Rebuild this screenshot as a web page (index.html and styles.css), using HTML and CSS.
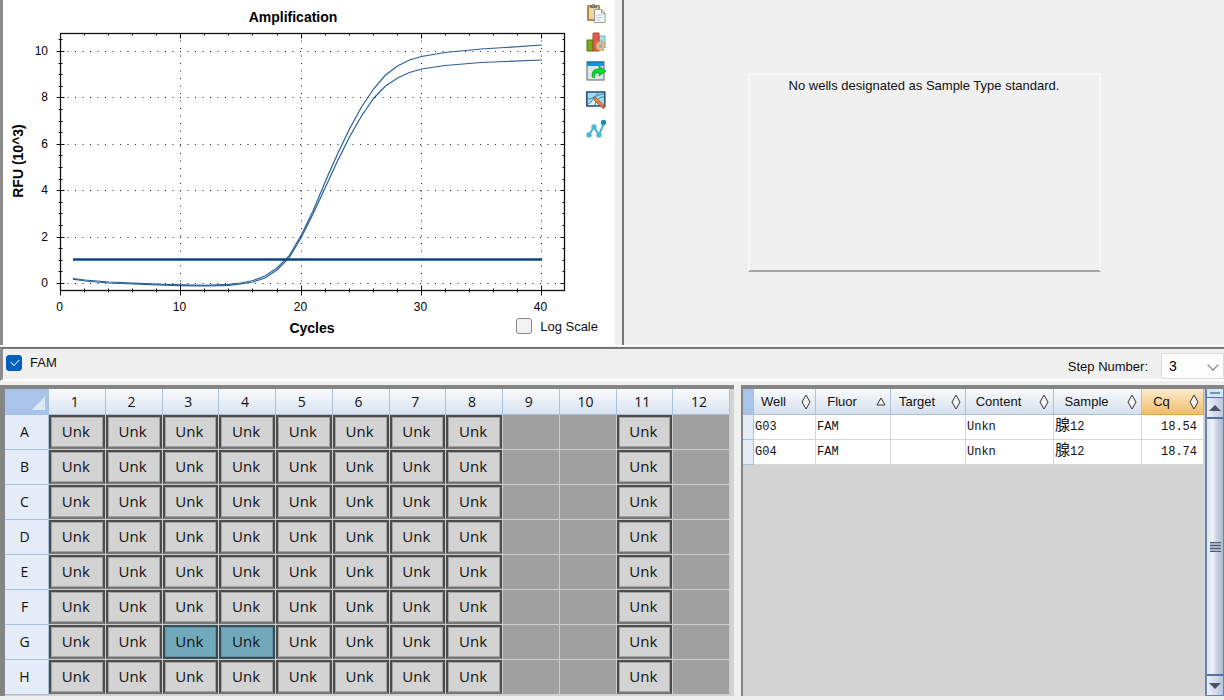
FILE: index.html
```html
<!DOCTYPE html>
<html lang="en">
  <head>
    <meta charset="utf-8">
    <title>Quantification</title>
    <link rel="stylesheet" href="styles.css">
  </head>
  <body>
    <section class="charts">
      <div class="chart-panel">
        <svg class="chart" viewBox="3 0 581 345" role="img" aria-label="Amplification">
          <g id="grid" class="grid"></g>
          <path class="curve" d="M73 278.5L85 280L109 282L133 283.2L157 284L181 284.8L205 285.4L229 284.4L241 283L253 280.5L265 276L277 268L289 256L301 235.5L313 211L325.500 181L337.500 154L349.500 129L361.500 107L373.500 89L385.500 75L397.500 66L409.500 60L421.500 56.500L445 52.500L481 49L505 47.500L542 45"/>
          <path class="curve" d="M73 279.2L85 281L109 283L133 284L157 284.8L181 285.6L205 286L229 285.4L241 284L253 282L265 278L277 270L289 258L301 238L313 214L325.500 187L337.500 161L349.500 137L361.500 116L373.500 98.500L385.500 86L397.500 78L409.500 72.500L421.500 69L445 65.500L481 62.500L505 61.500L542 60"/>
          <path class="threshold" d="M73 259.500H542"/>
          <rect class="frame" x="60.500" y="33.500" width="504" height="257"/>
          <g id="ticks" class="ticks"></g>
          <g id="labels" class="axis-labels"></g>
          <text class="chart-title" x="293" y="22">Amplification</text>
          <text class="chart-title" x="312" y="333">Cycles</text>
          <text class="chart-title" transform="translate(23 161) rotate(-90)">RFU (10^3)</text>
        </svg>
        <div class="tools">
          <button class="tool" aria-label="Copy">
            <svg viewBox="0 0 20 20"><rect x="1" y="2" width="13" height="16" rx="1" fill="#b98a3c"/><rect x="3" y="4" width="9" height="12" fill="#ecd6a8"/><path d="M4 2h7v3H4z" fill="#777"/><path d="M6 1h3v2H6z" fill="#999"/><path d="M8.500 6.500h7l3.500 3.500v9.500H8.500z" fill="#f7f9fc" stroke="#999"/><path d="M15.500 6.500v3.500H19" fill="none" stroke="#999"/><path d="M10.500 12h6M10.500 14.500h6M10.500 17h4" stroke="#b5c3da"/></svg>
          </button>
          <button class="tool" aria-label="Chart settings">
            <svg viewBox="0 0 20 20"><rect x="13" y="4" width="6" height="8" fill="#a8dcea" stroke="#69b3c7"/><path d="M1 8h6v11H1z" fill="#78a91b" stroke="#4d780b"/><path d="M7 1h6v18H7z" fill="#d9614b" stroke="#b84532"/><circle cx="14.500" cy="14" r="4.500" fill="#dfc092" stroke="#ba9564" stroke-width="2" stroke-dasharray="2 1.500"/><circle cx="14.500" cy="14" r="3.700" fill="#dfbd8a"/><circle cx="14.500" cy="14" r="1.800" fill="#82a6bd"/></svg>
          </button>
          <button class="tool" aria-label="Export">
            <svg viewBox="0 0 20 20"><rect x="1" y="1" width="17" height="18" fill="#dfe5ea" stroke="#5b6570"/><path d="M1 1h17v4H1z" fill="#0798e0"/><path d="M1 1h17" stroke="#0869a0"/><path d="M6.500 16.500C5 11 8 7.500 13 8V5l7 5-7 5v-3c-3-.5-4.500.5-4.500 4.500z" fill="#12d52d" stroke="#079b20" stroke-width=".7"/></svg>
          </button>
          <button class="tool" aria-label="Edit chart">
            <svg viewBox="0 0 20 20"><rect x=".8" y="2" width="18" height="14" fill="#9ddced" stroke="#234b80" stroke-width="1.500"/><path d="M2 14l7-6 5 7H2z" fill="#dff8ff"/><path d="M2 14C7 13 7 4 18 4M2 9c5 0 8-3 10-6M9 15c1-6 5-8 9-8" fill="none" stroke="#397fa4"/><path d="M7 7l2 4 7.500 7 2-2-7.500-7.500z" fill="#ef8130" stroke="#955029" stroke-width=".7"/><path d="M15.500 17l2.500-2 1.500 2-2 2z" fill="#c85263"/></svg>
          </button>
          <button class="tool" aria-label="Trace style">
            <svg viewBox="0 0 20 20"><path d="M3 16L8 8l5 8 5-12" fill="none" stroke="#43b3d1" stroke-width="2"/><g fill="#4ab9d6"><circle cx="3" cy="16" r="2.700"/><circle cx="8" cy="8" r="2.700"/><circle cx="13" cy="16" r="2.700"/></g><circle cx="17.500" cy="3.500" r="2.700" fill="#1690b7"/></svg>
          </button>
        </div>
        <label class="check log-scale"><input type="checkbox">Log Scale</label>
      </div>
      <div class="standard-panel">
        <div class="notice">No wells designated as Sample Type standard.</div>
      </div>
    </section>

    <section class="options">
      <label class="check"><input type="checkbox" checked>FAM</label>
      <div class="step">
        <label for="step">Step Number:</label>
        <span class="select">
          <select id="step"><option>3</option></select>
        </span>
      </div>
    </section>

    <section class="data">
      <div class="plate-panel">
        <table class="plate">
          <thead><tr id="plate-head"><th class="corner"></th></tr></thead>
          <tbody id="plate-body"></tbody>
        </table>
      </div>
      <div class="results-panel">
        <div class="results-scroll">
          <table class="results">
            <colgroup>
              <col class="col-mark"><col class="col-well"><col class="col-mid"><col class="col-mid"><col class="col-wide"><col class="col-wide"><col class="col-well">
            </colgroup>
            <thead>
              <tr>
                <th class="mark"></th>
                <th><div class="head"><span>Well</span><svg class="sort" viewBox="0 0 10 16"><path d="M5 1l4 7-4 7-4-7z"/></svg></div></th>
                <th><div class="head"><span>Fluor</span><svg class="sort" viewBox="0 0 10 16"><path d="M5 4l4 7H1z"/></svg></div></th>
                <th><div class="head"><span>Target</span><svg class="sort" viewBox="0 0 10 16"><path d="M5 1l4 7-4 7-4-7z"/></svg></div></th>
                <th><div class="head"><span>Content</span><svg class="sort" viewBox="0 0 10 16"><path d="M5 1l4 7-4 7-4-7z"/></svg></div></th>
                <th><div class="head"><span>Sample</span><svg class="sort" viewBox="0 0 10 16"><path d="M5 1l4 7-4 7-4-7z"/></svg></div></th>
                <th class="active"><div class="head"><span>Cq</span><svg class="sort" viewBox="0 0 10 16"><path d="M5 1l4 7-4 7-4-7z"/></svg></div></th>
              </tr>
            </thead>
            <tbody>
              <tr><td class="mark"></td><td>G03</td><td>FAM</td><td></td><td>Unkn</td><td><span class="cjk" lang="ja">腺</span>12</td><td class="num">18.54</td></tr>
              <tr><td class="mark"></td><td>G04</td><td>FAM</td><td></td><td>Unkn</td><td><span class="cjk" lang="ja">腺</span>12</td><td class="num">18.74</td></tr>
            </tbody>
          </table>
        </div>
        <div class="scrollbar">
          <div class="splitter"></div>
          <button class="arrow" aria-label="Scroll up"><svg viewBox="0 0 12 6"><path d="M6 0l6 6H0z"/></svg></button>
          <div class="thumb"><div class="grip"></div></div>
          <button class="arrow" aria-label="Scroll down"><svg viewBox="0 0 12 6"><path d="M0 0h12L6 6z"/></svg></button>
        </div>
      </div>
    </section>

    <script>
      var left = 60.5, right = 564.5, top_ = 33.5, bottom = 290.5;
      var grid = "", ticks = "", labels = "";

      function xPos(cycle){
        return left + Math.round(cycle * 12.03);
      }
      function yPos(rfu){
        return 283.5 - Math.round(rfu * 23.2);
      }

      for(var c = 0; c <= 40; c += 2){
        var x = xPos(c);
        var major = c % 10 == 0;
        var size = major ? 5 : 2;
        ticks += "M" + x + " " + (bottom - size) + "v" + size * 2;
        ticks += "M" + x + " " + top_ + "v" + size;
        if(major){
          if(c) grid += "M" + x + " " + top_ + "V" + bottom;
          labels += '<text x="' + (x - 1) + '" y="311">' + c + '</text>';
        }
      }
      for(var r = 0; r <= 10.5; r += 0.5){
        var y = yPos(r);
        var even = r % 2 == 0;
        var len = even ? 4 : 2;
        ticks += "M" + (left - len) + " " + y + "h" + len * 2;
        ticks += "M" + right + " " + y + "h" + -len;
        if(even){
          grid += "M" + left + " " + y + "H" + right;
          labels += '<text class="y" x="48" y="' + (y + 3) + '">' + r + '</text>';
        }
      }
      document.getElementById("grid").innerHTML = '<path d="' + grid + '"/>';
      document.getElementById("ticks").innerHTML = '<path d="' + ticks + '"/>';
      document.getElementById("labels").innerHTML = labels;

      // Plate: columns 9, 10 and 12 are empty
      var used = [1, 2, 3, 4, 5, 6, 7, 8, 11];
      var selected = ["G3", "G4"];
      var head = document.getElementById("plate-head");
      var body = "";

      for(var i = 1; i <= 12; i++){
        head.innerHTML += "<th>" + i + "</th>";
      }
      "ABCDEFGH".split("").forEach(function(row){
        body += "<tr><th>" + row + "</th>";
        for(var i = 1; i <= 12; i++){
          var cls = selected.indexOf(row + i) >= 0 ? "well selected" : "well";
          body += used.indexOf(i) >= 0 ? '<td><div class="' + cls + '">Unk</div></td>' : "<td></td>";
        }
        body += "</tr>";
      });
      document.getElementById("plate-body").innerHTML = body;
    </script>
  </body>
</html>
```

FILE: styles.css
```css
*{
  box-sizing: border-box;
}
body{
  margin: 0;
  min-height: 100vh;
  display: flex;
  flex-direction: column;
  background: #f0f0f0;
  color: #111;
  font-family: "Liberation Sans", Arial, sans-serif;
  font-size: 13px;
}
button{
  padding: 0;
  border: 0;
  background: none;
}

/* charts */
.charts{
  display: grid;
  grid-template-columns: minmax(0, 622fr) minmax(0, 602fr);
  border-bottom: 1px solid #fff;
}
.chart-panel{
  position: relative;
  display: flex;
  background: #fff;
  border-left: 3px solid #8c8c8c;
  border-right: 7px solid #f0f0f0;
}
.chart{
  flex: 1;
  min-width: 0;
}
.tools{
  width: 31px;
  padding: 3px 0 0 2px;
  display: flex;
  flex-direction: column;
  gap: 9px;
}
.tool, .tool svg{
  display: block;
  width: 20px;
  height: 20px;
}
.grid{
  stroke: #222;
  stroke-dasharray: 1 6.5;
  stroke-dashoffset: -7;
}
.frame, .ticks{
  fill: none;
  stroke: #111;
}
.frame{
  stroke-width: 1.3;
}
.curve{
  fill: none;
  stroke: #2a6099;
  stroke-width: 1.2;
}
.threshold{
  stroke: #0b4684;
  stroke-width: 2.4;
}
.axis-labels{
  font-size: 12px;
  text-anchor: middle;
}
.axis-labels .y{
  text-anchor: end;
}
.chart-title{
  font-size: 14px;
  font-weight: bold;
  text-anchor: middle;
}
.standard-panel{
  display: flex;
  justify-content: center;
  align-items: center;
  border-left: 2px solid #777;
}
.notice{
  width: 353px;
  height: 199px;
  padding-top: 3px;
  text-align: center;
  border: 2px solid #f7f7f7;
  border-bottom-color: #a5a5a5;
}

/* check boxes */
.check{
  display: flex;
  align-items: center;
  gap: 8px;
}
.check input{
  appearance: none;
  position: relative;
  width: 16px;
  height: 16px;
  margin: 0;
  border: 1px solid #858585;
  border-radius: 3px;
  background: #f3f3f3;
}
.check input:checked{
  border-color: #005fb8;
  background: #0060bc;
}
.check input:checked::after{
  content: "";
  position: absolute;
  left: 4px;
  top: 3px;
  width: 7px;
  height: 4px;
  border: solid #cfe4f7;
  border-width: 0 0 1px 1px;
  transform: rotate(-45deg);
}
.log-scale{
  position: absolute;
  right: 17px;
  bottom: 11px;
}

/* options strip */
.options{
  display: flex;
  justify-content: space-between;
  align-items: center;
  height: 34px;
  margin-top: 1px;
  padding-left: 3px;
  border-top: 2px solid #777;
  border-left: 3px solid #8c8c8c;
  border-bottom: 2px solid #fff;
}
.options > .check{
  padding-bottom: 3px;
}
.step{
  display: flex;
  align-items: center;
  gap: 13px;
  padding-top: 4px;
}
.select{
  position: relative;
}
.select select{
  appearance: none;
  display: block;
  width: 63px;
  height: 26px;
  padding: 0 7px;
  border: 1px solid #dcdcdc;
  border-radius: 0;
  background: #fdfdfd;
  font: inherit;
  font-size: 14px;
}
.select::after{
  content: "";
  position: absolute;
  right: 7px;
  top: 8px;
  width: 7px;
  height: 7px;
  border: solid #777;
  border-width: 0 1px 1px 0;
  transform: rotate(45deg);
  pointer-events: none;
}

/* plate and results */
.data{
  flex: 1;
  display: grid;
  grid-template-columns: minmax(0, 734fr) minmax(0, 483fr);
  gap: 7px;
  margin-top: 4px;
  padding-bottom: 4px;
}
.plate-panel{
  padding-right: 4px;
  border: solid #858585;
  border-width: 4px 0 0 5px;
  background: #d3d3d3;
}
.plate{
  width: 100%;
  table-layout: fixed;
  border-collapse: separate;
  border-spacing: 0;
  font-family: "Open Sans", "Noto Sans", sans-serif;
  font-size: 14px;
  line-height: 20px;
}
.plate th{
  padding: 0 4px 0 0;
  font-weight: normal;
  background: #e4ecf7;
  border: solid #a9c2dc;
  border-width: 0 1px 1px 0;
}
.plate thead th{
  height: 26px;
  background: linear-gradient(#f9fafc, #d9e3f0);
}
.plate thead .corner{
  width: 44px;
  background: linear-gradient(135deg, #a8c4ea 50%, #dce8f8 50%) 26px 7px / 14px 14px no-repeat, #a8c4ea;
}
.plate td{
  height: 35px;
  padding: 0;
  background: #a0a0a0;
  border: solid #cdcdcd;
  border-width: 0 1px 1px 0;
}
.plate .well{
  height: 34px;
  padding-right: 2px;
  line-height: 29px;
  text-align: center;
  font-size: 15px;
  background: #d3d3d3;
  border: 2px solid #4c4c4c;
  border-bottom-color: #777;
  box-shadow: inset 0 0 0 1px #a3a3a3;
}
.plate .selected{
  background: #71a9bb;
  border-color: #354e56;
  box-shadow: inset 0 0 0 1px #5f93a3;
}
.results-panel{
  display: flex;
  border: solid #858585;
  border-width: 4px 0 0 2px;
  background: #d3d3d3;
}
.results-scroll{
  flex: 1;
  min-width: 0;
}
.results{
  width: 100%;
  table-layout: fixed;
  border-collapse: separate;
  border-spacing: 0;
}
.col-mark{
  width: 11px;
}
.col-well{
  width: 62px;
}
.col-mid{
  width: 75px;
}
.col-wide{
  width: 88px;
}
.results th{
  height: 26px;
  padding: 0;
  font-weight: normal;
  background: linear-gradient(#f9fafc, #d5e0ee);
  border: solid #a9c2dc;
  border-width: 0 1px 1px 0;
}
.results th.active{
  background: linear-gradient(#fcecd0, #f1bd68);
  border-color: #eaa24c;
}
.results .head{
  display: flex;
  align-items: center;
  padding-right: 4px;
}
.head span{
  flex: 1;
  padding-right: 8px;
  text-align: center;
}
.sort{
  width: 10px;
  height: 16px;
  fill: #f4f4f4;
  stroke: #333;
}
.results td{
  height: 25px;
  padding: 0 1px;
  background: #fff;
  border: solid #d6d6d6;
  border-width: 0 1px 1px 0;
  font-family: "Liberation Mono", "Noto Sans CJK JP", monospace;
  font-size: 12px;
  line-height: 20px;
}
.results .cjk{
  font-size: 15px;
  line-height: 16px;
}
.results .num{
  padding-right: 6px;
  text-align: right;
}
.results th.mark{
  background: #a8c4ea;
}
.results td.mark{
  background: #e4ecf7;
  border-color: #a9c2dc;
}

/* scroll bar */
.scrollbar{
  display: flex;
  flex-direction: column;
  width: 19px;
  margin-left: 1px;
  border: solid #6783b1;
  border-width: 0 1px 1px 2px;
}
.splitter{
  height: 8px;
  border: 3px solid #d5e6f7;
  background: #7295bb;
}
.arrow{
  display: flex;
  align-items: center;
  justify-content: center;
  height: 20px;
  background: linear-gradient(90deg, #edf1f7, #b9c7da);
  border-top: 1px solid #5472a5;
}
.arrow svg{
  width: 12px;
  height: 6px;
  fill: #4a5368;
}
.thumb{
  flex: 1;
  display: flex;
  align-items: center;
  justify-content: center;
  border: solid #5472a5;
  border-width: 2px 0 1px;
  background: linear-gradient(90deg, #dfe5ef, #eef2f7 35%, #c5d0df 65%, #adbbd0);
}
.grip{
  width: 11px;
  height: 10px;
  background: repeating-linear-gradient(#4f5b73 0 1px, #aab5c8 1px 3px);
}
```
